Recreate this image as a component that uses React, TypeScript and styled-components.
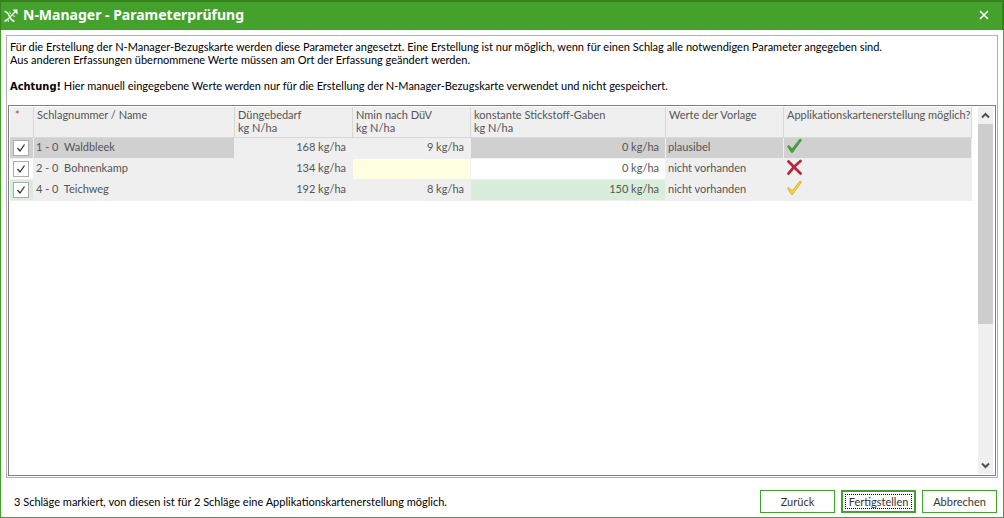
import React, { useState } from "react";
import styled, { createGlobalStyle, css } from "styled-components";

const green = "#44a12b";
const greenDark = "#37801f";
const textGrey = "#555555";
const cellGrey = "#efefef";
const line = "#d8d8d8";

const GlobalStyle = createGlobalStyle`
  *, *::before, *::after { box-sizing: border-box; }
  body {
    margin: 0;
    background: #ffffff;
    font-family: Lato, "Liberation Sans", sans-serif;
    font-size: 11px;
    line-height: 13px;
    color: #000000;
  }
  button, input { font: inherit; color: inherit; }
`;

const Dialog = styled.main`
  display: flex;
  flex-direction: column;
  min-height: 100vh;
`;

const TitleBar = styled.header`
  display: flex;
  align-items: center;
  height: 30px;
  padding: 0 13px 0 2px;
  border: solid ${greenDark};
  border-width: 2px 2px 0 1px;
  background: ${green};
  color: #ffffff;
`;

const Title = styled.h1`
  flex: 1;
  margin: 0 0 2px 4px;
  font: bold 14px/20px "Noto Sans", "Open Sans", sans-serif;
`;

const CloseButton = styled.button`
  display: grid;
  place-items: center;
  width: 10px;
  height: 20px;
  padding: 0 0 2px;
  border: 0;
  background: none;
`;

const Body = styled.div`
  display: flex;
  flex: 1;
  flex-direction: column;
  padding: 5px 5px 4px;
  border: 1px solid ${green};
  border-top: 0;
`;

const Panel = styled.section`
  display: flex;
  flex: 1;
  flex-direction: column;
  padding: 1px;
  border: 1px solid #b0b0b0;
`;

const Intro = styled.div`
  padding: 3px 2px 13px;
`;

const Paragraph = styled.p`
  margin: 0 0 13px;

  &:last-child { margin-bottom: 0; }
`;

const Warning = styled.strong`
  font-family: "DejaVu Sans Condensed", "DejaVu Sans", sans-serif;
  line-height: 1;
`;

const GridFrame = styled.div`
  display: flex;
  flex: 1;
  padding: 1px;
  border: 1px solid #7f7f7f;
`;

const GridArea = styled.div`
  flex: 1;
  min-width: 0;
  padding-right: 6px;
`;

const Table = styled.table`
  width: 100%;
  table-layout: fixed;
  border-collapse: separate;
  border-spacing: 0;
  color: ${textGrey};
`;

const Column = styled.col<{ $width?: number }>`
  width: ${({ $width }) => ($width ? `${$width}px` : "auto")};
`;

const HeadCell = styled.th`
  height: 31px;
  padding: 1px 0 3px 3px;
  border-right: 1px solid ${line};
  border-bottom: 1px solid ${line};
  background: ${cellGrey};
  font-weight: normal;
  text-align: left;
  vertical-align: top;
  white-space: nowrap;
`;

const Asterisk = styled.span`
  padding-left: 2px;
  color: #a8502a;
`;

type Tone = "plain" | "selected" | "white" | "green" | "yellow";

const tones: Record<Tone, string> = {
  plain: cellGrey,
  selected: "#d0d0d0",
  white: "#ffffff",
  green: "#d9eddb",
  yellow: "#ffffe1",
};

const Cell = styled.td<{ $tone: Tone; $align?: "right" | "center" }>`
  height: 21px;
  padding: 0 3px 4px 2px;
  border-right: 1px solid ${cellGrey};
  border-bottom: 1px solid ${cellGrey};
  background: ${({ $tone }) => tones[$tone]};
  white-space: pre;
  ${({ $align }) => $align === "right" && css`padding-right: 6px; text-align: right;`}
  ${({ $align }) => $align === "center" && css`padding: 0 3px;`}
`;

const ValueInput = styled.input`
  display: block;
  width: 100%;
  height: 16px;
  padding: 0;
  border: 0;
  background: transparent;
  text-align: right;
  outline: none;
`;

const CheckLabel = styled.label`
  display: grid;
  width: 16px;
  height: 16px;

  > * { grid-area: 1 / 1; }
`;

const CheckInput = styled.input`
  width: 16px;
  height: 16px;
  margin: 0;
  appearance: none;
  border: 1px solid #acacac;
  background: #ffffff;

  &:not(:checked) + svg { visibility: hidden; }
`;

const CheckGlyph = styled.svg`
  place-self: center;
  pointer-events: none;
`;

const StatusIcon = styled.svg`
  display: block;
`;

const ScrollBar = styled.div`
  display: flex;
  flex-direction: column;
  width: 16px;
  border-right: 1px solid #ffffff;
  background: #f0f0f0;
`;

const ScrollButton = styled.button`
  display: grid;
  place-items: center;
  height: 17px;
  padding: 0;
  border: 0;
  background: none;
`;

const ScrollTrack = styled.div`
  flex: 1;
`;

const ScrollThumb = styled.div`
  height: 60%;
  background: #cdcdcd;
`;

const Footer = styled.footer`
  display: flex;
  align-items: center;
  gap: 6px;
  padding: 12px 1px 0 8px;
`;

const Summary = styled.p`
  flex: 1;
  margin: 0;
`;

const FooterButton = styled.button<{ $primary?: boolean }>`
  width: 75px;
  height: 23px;
  padding: ${({ $primary }) => ($primary ? "2px" : "0")};
  border: ${({ $primary }) => ($primary ? 2 : 1)}px solid ${green};
  background: #ffffff;
  color: #333333;
`;

const FocusFrame = styled.span`
  display: block;
  border: 1px dotted #000000;
`;

const Logo = () => (
  <svg width="16" height="16" viewBox="0 0 16 16" fill="none" stroke="#e6f3e2" aria-hidden="true">
    <path d="M1.500 3.500C4.500 3.500 5.500 6 6.500 8.500S8.500 12.500 11.500 13.500" strokeWidth="1.600" />
    <path d="M1.500 13.500L4.500 11.500L12.500 3.500" strokeWidth="1.600" />
    <path d="M6.500 3.500L7.500 6M5.500 14L5 11.500M9.500 7.500L12 8.500" strokeWidth="1" />
    <path d="M9.500 1.500H14.500V6.500Z" fill="#ffffff" stroke="none" />
  </svg>
);

type Status = "ok" | "error" | "warn";

const StatusMark = ({ status }: { status: Status }) => {
  if (status === "error") {
    return (
      <StatusIcon width="17" height="16" viewBox="0 0 17 16" role="img" aria-label="nein">
        <path d="M2.500 2.500Q7 7 14.500 14.500M14.500 2Q8 7 2.500 14.500" fill="none" stroke="#b7243c" strokeWidth="2.800" strokeLinecap="round" />
      </StatusIcon>
    );
  }
  const ok = status === "ok";
  return (
    <StatusIcon width="17" height="16" viewBox="0 0 17 16" role="img" aria-label={ok ? "ja" : "eingeschränkt"}>
      <path
        d="M1.500 8.500L3 7.500L6 11L14 1L15.500 2L6.500 14.500H5.500Z"
        fill={ok ? "#44a53a" : "#ffd42e"}
        stroke={ok ? "#3d8b37" : "#c9a648"}
        strokeWidth="0.800"
        strokeLinejoin="round"
      />
    </StatusIcon>
  );
};

const Chevron = ({ down }: { down?: boolean }) => (
  <svg width="9" height="7" viewBox="0 0 9 7" aria-hidden="true">
    <path d={down ? "M1 1.500L4.500 5L8 1.500" : "M1 5.500L4.500 2L8 5.500"} fill="none" stroke="#505050" strokeWidth="2" />
  </svg>
);

interface Field {
  name: string;
  markTone: Tone;
  nameTone: Tone;
  demand: string;
  nmin?: string;
  constant: string;
  constantTone: Tone;
  template: string;
  status: Status;
}

const fields: Field[] = [
  { name: "1 - 0  Waldbleek", markTone: "selected", nameTone: "selected", demand: "168 kg/ha", nmin: "9 kg/ha", constant: "0 kg/ha", constantTone: "selected", template: "plausibel", status: "ok" },
  { name: "2 - 0  Bohnenkamp", markTone: "white", nameTone: "plain", demand: "134 kg/ha", constant: "0 kg/ha", constantTone: "white", template: "nicht vorhanden", status: "error" },
  { name: "4 - 0  Teichweg", markTone: "green", nameTone: "plain", demand: "192 kg/ha", nmin: "8 kg/ha", constant: "150 kg/ha", constantTone: "green", template: "nicht vorhanden", status: "warn" },
];

const FieldRow = ({ field }: { field: Field }) => {
  const [checked, setChecked] = useState(true);
  return (
    <tr>
      <Cell $tone={field.markTone} $align="center">
        <CheckLabel>
          <CheckInput type="checkbox" aria-label={field.name} checked={checked} onChange={(e) => setChecked(e.target.checked)} />
          <CheckGlyph width="10" height="10" viewBox="0 0 10 10" aria-hidden="true">
            <path d="M1.500 5L4 8L8.500 1.500" fill="none" stroke="#333333" strokeWidth="1.300" />
          </CheckGlyph>
        </CheckLabel>
      </Cell>
      <Cell $tone={field.nameTone}>{field.name}</Cell>
      <Cell $tone="plain" $align="right">{field.demand}</Cell>
      <Cell $tone={field.nmin ? "plain" : "yellow"} $align="right">
        {field.nmin ?? <ValueInput type="text" aria-label={`Nmin nach DüV, ${field.name}`} />}
      </Cell>
      <Cell $tone={field.constantTone} $align="right">{field.constant}</Cell>
      <Cell $tone={field.nameTone}>{field.template}</Cell>
      <Cell $tone={field.nameTone}>
        <StatusMark status={field.status} />
      </Cell>
    </tr>
  );
};

export default function App() {
  return (
    <>
      <GlobalStyle />
      <Dialog>
        <TitleBar>
          <Logo />
          <Title>N-Manager - Parameterprüfung</Title>
          <CloseButton aria-label="Schließen">
            <svg width="10" height="10" viewBox="0 0 10 10" aria-hidden="true">
              <path d="M1 1L9 9M9 1L1 9" stroke="#ffffff" strokeWidth="1.600" />
            </svg>
          </CloseButton>
        </TitleBar>
        <Body>
          <Panel>
            <Intro>
              <Paragraph>
                Für die Erstellung der N-Manager-Bezugskarte werden diese Parameter angesetzt. Eine Erstellung ist nur möglich, wenn für einen Schlag alle notwendigen Parameter angegeben sind.
                <br />
                Aus anderen Erfassungen übernommene Werte müssen am Ort der Erfassung geändert werden.
              </Paragraph>
              <Paragraph>
                <Warning>Achtung!</Warning> Hier manuell eingegebene Werte werden nur für die Erstellung der N-Manager-Bezugskarte verwendet und nicht gespeichert.
              </Paragraph>
            </Intro>
            <GridFrame>
              <GridArea>
                <Table>
                  <colgroup>
                    <Column $width={24} />
                    <Column />
                    <Column $width={118} />
                    <Column $width={118} />
                    <Column $width={195} />
                    <Column $width={118} />
                    <Column $width={188} />
                  </colgroup>
                  <thead>
                    <tr>
                      <HeadCell><Asterisk>*</Asterisk></HeadCell>
                      <HeadCell>Schlagnummer / Name</HeadCell>
                      <HeadCell>Düngebedarf<br />kg N/ha</HeadCell>
                      <HeadCell>Nmin nach DüV<br />kg N/ha</HeadCell>
                      <HeadCell>konstante Stickstoff-Gaben<br />kg N/ha</HeadCell>
                      <HeadCell>Werte der Vorlage</HeadCell>
                      <HeadCell>Applikationskartenerstellung möglich?</HeadCell>
                    </tr>
                  </thead>
                  <tbody>
                    {fields.map((field) => (
                      <FieldRow key={field.name} field={field} />
                    ))}
                  </tbody>
                </Table>
              </GridArea>
              <ScrollBar>
                <ScrollButton aria-label="Nach oben"><Chevron /></ScrollButton>
                <ScrollTrack><ScrollThumb /></ScrollTrack>
                <ScrollButton aria-label="Nach unten"><Chevron down /></ScrollButton>
              </ScrollBar>
            </GridFrame>
          </Panel>
          <Footer>
            <Summary>3 Schläge markiert, von diesen ist für 2 Schläge eine Applikationskartenerstellung möglich.</Summary>
            <FooterButton type="button">Zurück</FooterButton>
            <FooterButton type="button" $primary><FocusFrame>Fertigstellen</FocusFrame></FooterButton>
            <FooterButton type="button">Abbrechen</FooterButton>
          </Footer>
        </Body>
      </Dialog>
    </>
  );
}
